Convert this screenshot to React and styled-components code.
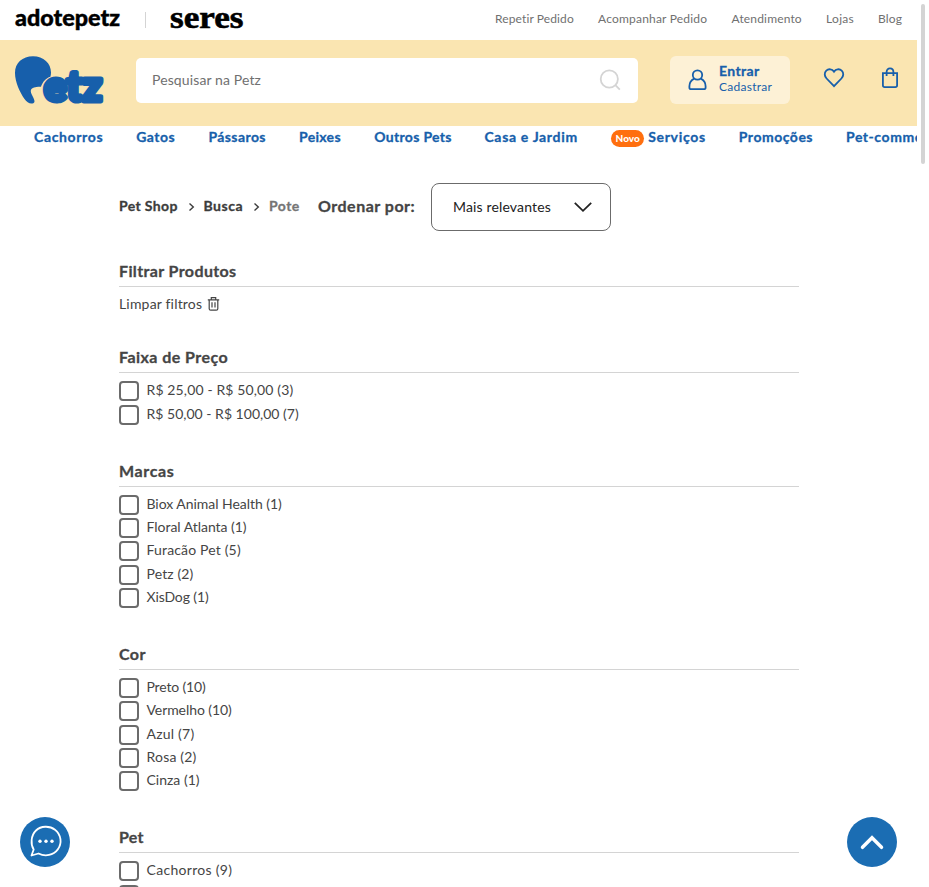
import React from "react";
import styled, { createGlobalStyle } from "styled-components";

const Global = createGlobalStyle`
  * { box-sizing: border-box; }
  html, body { margin: 0; height: 887px; overflow: hidden; background: #fff; }
  body { font-family: Lato, "Open Sans", sans-serif; font-size: 14px; color: #454545; }
`;

const blue = "#175fab";

const Page = styled.div`
  display: flex;
  width: 929px;
  height: 887px;
  overflow: hidden;
`;
const Content = styled.div`
  width: 917px;
  height: 887px;
  overflow: hidden;
  flex: none;
`;
const ScrollTrack = styled.div`
  width: 12px;
  padding: 4px 4px 0;
`;
const ScrollThumb = styled.div`
  width: 4px;
  height: 160px;
  border-radius: 2px;
  background: #d4d4d4;
`;

const Label = styled.span`
  display: block;
  flex: none;
  white-space: nowrap;
  width: ${(p) => (p.$w ? `${p.$w}px` : "auto")};
  letter-spacing: ${(p) => p.$track || 0}px;
`;
const StrongLabel = styled(Label)`
  font-weight: 700;
  -webkit-text-stroke: 0.3px currentColor;
`;

const TopBar = styled.div`
  display: flex;
  align-items: center;
  height: 40px;
  padding-left: 15px;
`;
const Brand = styled.svg`
  display: block;
  flex: none;
  overflow: visible;
`;
const Divider = styled.div`
  width: 1px;
  height: 16px;
  margin: 0 24px;
  background: #d4d4d4;
`;
const TopLinks = styled.nav`
  display: flex;
  margin-left: 249px;
  padding-bottom: 2px;
  gap: 24px;
  font-size: 12px;
  line-height: 20px;
  color: #707070;
`;

const Header = styled.header`
  display: flex;
  align-items: flex-start;
  height: 86px;
  padding: 16px 0 0 14px;
  background: #fae5b1;
`;
const SearchBox = styled.div`
  display: flex;
  align-items: center;
  justify-content: space-between;
  width: 502px;
  height: 45px;
  margin: 2px 32px 0;
  padding: 0 16px 2px;
  border-radius: 5px;
  background: #fff;
  color: #707070;
`;
const Account = styled.div`
  display: flex;
  align-items: center;
  width: 120px;
  height: 48px;
  padding-left: 18px;
  gap: 12px;
  border-radius: 6px;
  background: #fdf1d6;
  color: ${blue};
`;
const AccountText = styled.div`
  display: flex;
  flex-direction: column;
  padding-bottom: 3px;
  font-size: 12px;
  line-height: 16px;
`;
const Enter = styled(StrongLabel)`
  font-size: 14px;
  line-height: 17px;
`;
const HeaderIcons = styled.div`
  display: flex;
  gap: 36px;
  margin: 11px 0 0 33px;
`;

const Nav = styled.nav`
  display: flex;
  height: 24px;
  padding: 0 0 3px 34px;
  gap: 33.2px;
  line-height: 21px;
  color: ${blue};
`;
const NavItem = styled.div`
  display: flex;
  align-items: center;
  flex: none;
  gap: 4px;
`;
const NewBadge = styled.span`
  width: 33px;
  height: 17px;
  margin-top: 3px;
  border-radius: 9px;
  background: #ff6f0f;
  color: #fff;
  font-size: 10px;
  font-weight: 900;
  line-height: 17px;
  text-align: center;
`;

const Main = styled.main`
  width: 680px;
  margin: 33px 0 0 119px;
`;
const ToolRow = styled.div`
  display: flex;
  align-items: center;
  height: 48px;
`;
const Crumbs = styled.div`
  display: flex;
  align-items: center;
  width: 199px;
  padding-bottom: 3px;
  color: #3c3c3c;
`;
const CrumbArrow = styled.svg`
  flex: none;
  margin: 3px 9px 0 8.5px;
`;
const Muted = styled(StrongLabel)`
  color: #757575;
`;
const OrderLabel = styled(StrongLabel)`
  padding-bottom: 3px;
  font-size: 16px;
`;
const Select = styled.div`
  display: flex;
  align-items: center;
  justify-content: space-between;
  width: 180px;
  height: 48px;
  padding: 0 17px 1px 21px;
  border: 1px solid #6b6b6b;
  border-radius: 8px;
  color: #222;
`;

const FilterList = styled.div`
  padding-top: 28.4px;
`;
const Section = styled.section`
  padding-bottom: ${(p) => p.$bottom || 30.67}px;
`;
const SectionTitle = styled.h2`
  height: 28px;
  margin: 0 0 8px;
  border-bottom: 1px solid #d4d4d4;
  font-size: 16px;
  line-height: 24px;
`;
const Clear = styled.div`
  display: flex;
  align-items: center;
  height: 20px;
  padding-bottom: 3px;
  gap: 5px;
`;
const Option = styled.label`
  display: flex;
  align-items: flex-start;
  height: 23.333px;
  gap: 7.5px;
  line-height: 17.5px;
`;
const Check = styled.span`
  width: 20px;
  height: 20px;
  flex: none;
  border: 2px solid #6b6b6b;
  border-radius: 4px;
  background: #fff;
`;

const Floating = styled.button`
  position: fixed;
  top: 817px;
  left: ${(p) => p.$left}px;
  width: 50px;
  height: 50px;
  padding: 0;
  border: 0;
  border-radius: 50%;
  background: #1b6db3;
`;
const FloatIcon = styled.svg`
  display: block;
`;

const topLinks = [
  ["Repetir Pedido", 79, 0.12],
  ["Acompanhar Pedido", 109.5, 0.2],
  ["Atendimento", 70.5, 0.16],
  ["Lojas", 28, 0.3],
  ["Blog", 26, 0.15],
];

const navItems = [
  ["Cachorros", 69, 0.63],
  ["Gatos", 39, 0.5],
  ["Pássaros", 57.5, 0.42],
  ["Peixes", 42, 0.3],
  ["Outros Pets", 77, 0.32],
  ["Casa e Jardim", 93.5, 0.67],
  ["Serviços", 57.5, 0.7, true],
  ["Promoções", 74, 0.5],
  ["Pet-commerce", 98, 0.55],
];

const sections = [
  ["Faixa de Preço", 0.45, [["R$ 25,00 - R$ 50,00 (3)", 0.13], ["R$ 50,00 - R$ 100,00 (7)", 0.01]]],
  ["Marcas", 0.65, [
    ["Biox Animal Health (1)", -0.04],
    ["Floral Atlanta (1)", -0.03],
    ["Furacão Pet (5)", 0.16],
    ["Petz (2)", 0.13],
    ["XisDog (1)", -0.12],
  ]],
  ["Cor", 0.4, [
    ["Preto (10)", -0.17],
    ["Vermelho (10)", -0.08],
    ["Azul (7)", 0.22],
    ["Rosa (2)", 0.2],
    ["Cinza (1)", 0],
  ]],
  ["Pet", 0.2, [["Cachorros (9)", 0.3], ["Gatos (4)", 0.3]]],
];

const AdoteLogo = () => (
  <Brand width="106" height="30" viewBox="0 0 106 30">
    <text x="0" y="20.5" fontFamily="Lato, sans-serif" fontWeight="900" fontSize="22" textLength="105" lengthAdjust="spacingAndGlyphs" stroke="#000" strokeWidth=".4">adotepetz</text>
  </Brand>
);

const SeresLogo = () => (
  <Brand width="76" height="30" viewBox="0 0 76 30">
    <text x="0" y="22.5" fontFamily="'Liberation Serif', serif" fontWeight="700" fontSize="32" textLength="73.5" lengthAdjust="spacingAndGlyphs" stroke="#000" strokeWidth=".6">seres</text>
  </Brand>
);

const PetzLogo = () => (
  <Brand width="90" height="50" viewBox="0 0 90 50" fill={blue} role="img">
    <path d="M1 17C1 7 8.500.3 19 .3S37 7.500 37 16.500c0 1.600-.2 3-.6 4.200C32 22 28.500 26 27 30.700c-4 0-8 .2-9.700 2.600-1.300 2 .2 4.700 1.700 7.700 1.300 2.700 2.500 5.300.3 6.200-3 1.200-6.300-.6-9-4.500C6 36.500 1 26 1 17Z" />
    <text x="30" y="44.800" fontFamily="Lato, sans-serif" fontWeight="900" fontSize="42" stroke={blue} strokeWidth="5" strokeLinejoin="round" textLength="58" lengthAdjust="spacingAndGlyphs">etz</text>
  </Brand>
);

const Chevron = () => (
  <CrumbArrow width="7" height="10" viewBox="0 0 7 10" fill="none" stroke="#3c3c3c" strokeWidth="1.4">
    <path d="M1.5 1.5 5.3 5 1.5 8.5" />
  </CrumbArrow>
);

const SearchIcon = () => (
  <Brand width="24" height="24" viewBox="0 0 24 24" fill="none" stroke="#d4d4d4" strokeWidth="1.8">
    <circle cx="11.3" cy="11" r="8.6" />
    <path d="m17.4 17.2 4.4 4.400" />
  </Brand>
);

const UserIcon = () => (
  <Brand width="19" height="22" viewBox="0 0 19 22" fill="none" stroke={blue} strokeWidth="1.8">
    <circle cx="9.5" cy="6" r="4.7" />
    <path d="M6.2 9.6C3.3 11 1.4 13.7 1.4 17.2v1.2q0 1.8 1.8 1.8h12.6q1.8 0 1.8-1.8v-1.2c0-3.5-1.9-6.2-4.8-7.6" />
  </Brand>
);

const HeartIcon = () => (
  <Brand width="22" height="22" viewBox="0 0 22 22" fill="none" stroke={blue} strokeWidth="1.8">
    <path d="M11 19.2 3.6 11.5C1.2 9 1.2 5.6 3.3 3.6c2.3-2.2 5.8-1.6 7.7 1 1.9-2.6 5.4-3.2 7.7-1 2.1 2 2.1 5.4-.3 7.9Z" />
  </Brand>
);

const BagIcon = () => (
  <Brand width="18" height="22" viewBox="0 0 18 22" fill="none" stroke={blue} strokeWidth="1.8">
    <path d="M1.9 6.1h14.2v12.2q0 1.8-1.8 1.8H3.7q-1.8 0-1.8-1.8ZM5.6 9V5C5.6 2.6 7.1 1.4 9 1.4S12.4 2.6 12.4 5v4" />
  </Brand>
);

const TrashIcon = () => (
  <Brand width="13" height="14" viewBox="0 0 13 14" fill="none" stroke="#454545" strokeWidth="1.2">
    <path d="M.8 2.9h11.4M4.3 2.6V.7h4.4v1.9M2.2 3v8.7q0 1.5 1.5 1.5h5.6q1.5 0 1.5-1.5V3M5 5.3v5.3M8 5.3v5.3" />
  </Brand>
);

export default function App() {
  return (
    <Page>
      <Global />
      <Content>
        <TopBar>
          <AdoteLogo />
          <Divider />
          <SeresLogo />
          <TopLinks>
            {topLinks.map(([text, w, track]) => (
              <Label key={text} $w={w} $track={track}>{text}</Label>
            ))}
          </TopLinks>
        </TopBar>

        <Header>
          <PetzLogo />
          <SearchBox>
            <Label $track={0.12}>Pesquisar na Petz</Label>
            <SearchIcon />
          </SearchBox>
          <Account>
            <UserIcon />
            <AccountText>
              <Enter $track={0.35}>Entrar</Enter>
              <Label $track={0.26}>Cadastrar</Label>
            </AccountText>
          </Account>
          <HeaderIcons>
            <HeartIcon />
            <BagIcon />
          </HeaderIcons>
        </Header>

        <Nav>
          {navItems.map(([text, w, track, isNew]) => (
            <NavItem key={text}>
              {isNew && <NewBadge>Novo</NewBadge>}
              <StrongLabel $w={w} $track={track}>{text}</StrongLabel>
            </NavItem>
          ))}
        </Nav>

        <Main>
          <ToolRow>
            <Crumbs>
              <StrongLabel $w={60} $track={0.38}>Pet Shop</StrongLabel>
              <Chevron />
              <StrongLabel $w={41} $track={0.5}>Busca</StrongLabel>
              <Chevron />
              <Muted $track={0.45}>Pote</Muted>
            </Crumbs>
            <OrderLabel $w={113} $track={0.5}>Ordenar por:</OrderLabel>
            <Select>
              <Label $track={0.15}>Mais relevantes</Label>
              <Brand width="20" height="12" viewBox="0 0 20 12" fill="none" stroke="#222" strokeWidth="1.8">
                <path d="m1.8 1.8 8.2 8 8.2-8" />
              </Brand>
            </Select>
          </ToolRow>

          <FilterList>
            <Section $bottom={30}>
              <SectionTitle><StrongLabel $track={0.38}>Filtrar Produtos</StrongLabel></SectionTitle>
              <Clear>
                <Label $track={0.18}>Limpar filtros</Label>
                <TrashIcon />
              </Clear>
            </Section>
            {sections.map(([title, track, options]) => (
              <Section key={title}>
                <SectionTitle><StrongLabel $track={track}>{title}</StrongLabel></SectionTitle>
                {options.map(([text, optionTrack]) => (
                  <Option key={text}>
                    <Check />
                    <Label $track={optionTrack}>{text}</Label>
                  </Option>
                ))}
              </Section>
            ))}
          </FilterList>
        </Main>
      </Content>
      <ScrollTrack><ScrollThumb /></ScrollTrack>

      <Floating $left={20}>
        <FloatIcon width="50" height="50" viewBox="0 0 50 50" fill="none" stroke="#fff" strokeWidth="1.8" strokeLinejoin="round">
          <path d="M11.500 38.500 13.700 32.500C10.400 27.500 10.800 18.500 16 13.500 21 8.800 29.500 8.500 35 12.700c6.300 5 7.300 13.700 2.800 19.700-4.400 6-12.600 7.500-19.300 4.100Z" />
          <g fill="#fff" stroke="none">
            <circle cx="20" cy="24.300" r="1.700" />
            <circle cx="26" cy="24.300" r="1.700" />
            <circle cx="32" cy="24.300" r="1.700" />
          </g>
        </FloatIcon>
      </Floating>
      <Floating $left={847}>
        <FloatIcon width="50" height="50" viewBox="0 0 50 50" fill="none" stroke="#fff" strokeWidth="3.500" strokeLinecap="round">
          <path d="m15.500 30.300 9.500-9.500 9.500 9.500" />
        </FloatIcon>
      </Floating>
    </Page>
  );
}
